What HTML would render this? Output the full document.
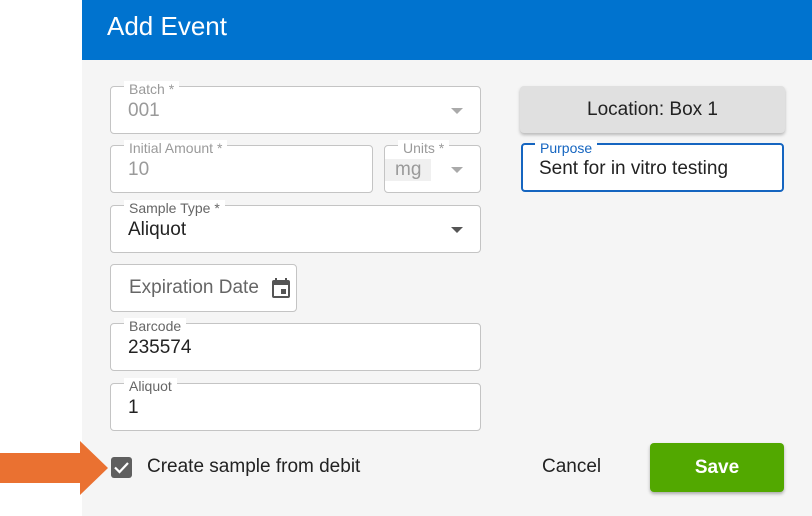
<!DOCTYPE html><html><head><style>
body{margin:0;width:812px;height:516px;background:#fff;position:relative;overflow:hidden;font-family:"Liberation Sans",sans-serif}
.a{position:absolute}
.dlg{left:82px;top:0;width:730px;height:516px;background:#f5f5f5}
.hd{left:82px;top:0;width:730px;height:60px;background:#0073cf;color:#fff;font-size:26px}
.f{position:absolute;background:#fff;border:1px solid #c4c4c4;border-radius:4px;box-sizing:border-box}
.lb{position:absolute;left:13px;top:-6px;background:#fff;padding:0 5px;font-size:14px;color:#666;line-height:16px}
.v{position:absolute;left:17px;top:13px;font-size:19px;color:#222}
.dis .v{color:#9a9a9a}.dis .lb{color:#9a9a9a}
.tri{position:absolute;right:17px;top:21px;width:0;height:0;border-left:6px solid transparent;border-right:6px solid transparent;border-top:6px solid #555}
.dis .tri{border-top-color:#aaa}
</style></head><body>
<div class="a dlg"></div>
<div class="a hd"><span class="a" style="left:25px;top:11px">Add Event</span></div>
<div class="f dis" style="left:110px;top:86px;width:371px;height:48px"><span class="lb">Batch *</span><span class="v">001</span><i class="tri"></i></div>
<div class="f dis" style="left:110px;top:145px;width:263px;height:48px"><span class="lb">Initial Amount *</span><span class="v">10</span></div>
<div class="f dis" style="left:384px;top:145px;width:97px;height:48px"><span class="lb" style="left:13px">Units *</span><span class="v" style="left:0;padding:0 10px;background:#f0f0f0">mg</span><i class="tri"></i></div>
<div class="f" style="left:110px;top:205px;width:371px;height:48px"><span class="lb">Sample Type *</span><span class="v">Aliquot</span><i class="tri"></i></div>
<div class="f" style="left:110px;top:264px;width:187px;height:48px"><span class="v" style="top:12px;left:18px;color:#666">Expiration Date</span>
<svg class="a" style="left:158px;top:11px" width="24" height="24" viewBox="0 0 24 24"><path fill="#555" d="M19 4h-1V2h-2v2H8V2H6v2H5a2 2 0 0 0-2 2v14a2 2 0 0 0 2 2h14a2 2 0 0 0 2-2V6a2 2 0 0 0-2-2zm0 16H5V9h14v11zm-7-7h5v5h-5z"/></svg></div>
<div class="f" style="left:110px;top:323px;width:371px;height:48px"><span class="lb">Barcode</span><span class="v">235574</span></div>
<div class="f" style="left:110px;top:383px;width:371px;height:48px"><span class="lb">Aliquot</span><span class="v">1</span></div>
<div class="a" style="left:520px;top:86px;width:265px;height:47px;background:#e0e0e0;border-radius:4px;box-shadow:0 2px 3px rgba(0,0,0,.25);text-align:center;line-height:47px;font-size:19px;color:#222">Location: Box 1</div>
<div class="f" style="left:521px;top:143px;width:263px;height:49px;border:2px solid #1565c0"><span class="lb" style="color:#1565c0;top:-5px;left:12px">Purpose</span><span class="v" style="left:16px;top:13px">Sent for in vitro testing</span></div>
<div class="a" style="left:0;top:453px;width:82px;height:30px;background:#ea7131"></div>
<div class="a" style="left:80px;top:441px;width:0;height:0;border-top:27px solid transparent;border-bottom:27px solid transparent;border-left:28px solid #ea7131"></div>
<div class="a" style="left:111px;top:457px;width:21px;height:21px;background:#5f5f5f;border-radius:3px"><svg width="21" height="21" viewBox="0 0 21 21"><path d="M4 10.5l4.5 4.5 8.5-9" stroke="#fff" stroke-width="2.2" fill="none"/></svg></div>
<div class="a" style="left:147px;top:456px;font-size:19px;color:#222">Create sample from debit</div>
<div class="a" style="left:542px;top:456px;font-size:19px;color:#222">Cancel</div>
<div class="a" style="left:650px;top:443px;width:134px;height:49px;background:#52a800;border-radius:4px;box-shadow:0 2px 3px rgba(0,0,0,.3);color:#fff;font-weight:bold;font-size:19px;text-align:center;line-height:49px">Save</div>
</body></html>
